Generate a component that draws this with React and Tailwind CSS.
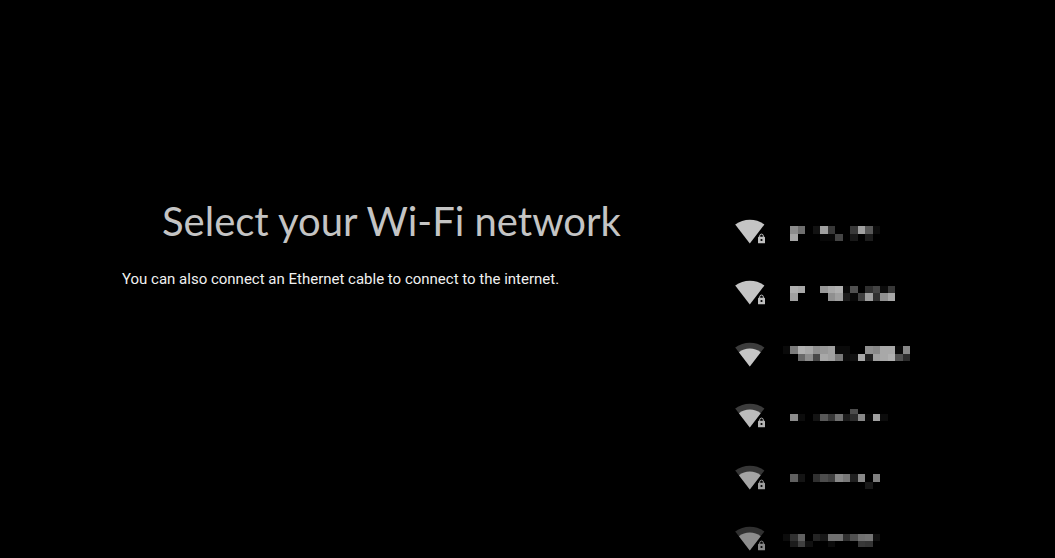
import React from "react";

const CELL = 7.5;

// Each network name is a mosaic: `top` is the y of the first line of cells,
// `from` and `to` trim the mosaic vertically, and every line lists grey
// levels from left to right.
const networks = [
  {
    strength: "full", locked: true, tone: "#c4c4c4", outer: "#c4c4c4", lock: "#c0c0c0", top: 9.75, from: 0, to: 30,
    lines: [
      [0, 140, 110, 0, 18, 160, 56, 0, 0, 56, 160, 88, 12],
      [0, 165, 0, 0, 0, 8, 8, 68, 0, 24, 0, 28],
    ],
  },
  {
    strength: "full", locked: true, tone: "#c4c4c4", outer: "#c4c4c4", lock: "#c0c0c0", top: 8.25, from: 0, to: 30,
    lines: [
      [0, 176, 168, 0, 0, 152, 168, 176, 8, 80, 0, 48, 68, 12, 56],
      [0, 160, 0, 0, 0, 0, 144, 160, 28, 8, 64, 160, 48, 144, 168],
    ],
  },
  {
    strength: "medium", locked: false, tone: "#c6c6c6", outer: "#3c3c3c", lock: "#c0c0c0", top: 6.75, from: 0, to: 30,
    lines: [
      [10, 124, 176, 168, 144, 152, 160, 10, 10, 0, 0, 144, 136, 168, 168, 8, 136],
      [0, 0, 104, 140, 72, 168, 160, 120, 12, 16, 168, 32, 160, 168, 176, 80, 44],
    ],
  },
  {
    strength: "medium", locked: true, tone: "#bcbcbc", outer: "#3c3c3c", lock: "#b4b4b4", top: 5.75, from: 8.75, to: 30,
    lines: [
      [0, 0, 0, 0, 0, 0, 0, 0, 0, 76],
      [0, 140, 12, 0, 20, 88, 56, 112, 28, 44, 136, 8, 160, 12],
    ],
  },
  {
    strength: "medium", locked: true, tone: "#a4a4a4", outer: "#363636", lock: "#a0a0a0", top: 11.75, from: 0, to: 30,
    lines: [
      [0, 96, 20, 0, 48, 76, 64, 136, 120, 32, 136, 0, 128],
      [0, 0, 0, 0, 0, 0, 0, 0, 0, 0, 0, 24],
    ],
  },
  {
    strength: "medium", locked: true, tone: "#8c8c8c", outer: "#303030", lock: "#888888", top: 10.25, from: 0, to: 23.5,
    lines: [
      [12, 48, 96, 0, 36, 24, 112, 112, 48, 80, 112, 116, 16],
      [0, 28, 64, 16, 0, 0, 12, 0, 0, 0, 56, 52],
    ],
  },
];

function SignalIcon({ network }) {
  return (
    <svg className="h-[30px] w-8 shrink-0" viewBox="0 0 32 30" aria-hidden="true">
      <path d="M0.2 7.6A24.8 24.8 0 0 1 29.4 7.6L14.8 26.6Z" fill={network.outer} />
      {network.strength === "medium" && (
        <path d="M3.9 12.2A17.8 17.8 0 0 1 25.7 12.2L14.8 26.6Z" fill={network.tone} />
      )}
      {network.locked && (
        <g>
          <path d="M24.7 20V18.9a1.8 1.8 0 0 1 3.6 0V20" fill="none" stroke={network.lock} strokeWidth="1" />
          <rect x="23" y="19.7" width="7" height="6.6" rx="0.6" fill={network.lock} />
          <circle cx="26.5" cy="23" r="1.1" fill="#000" />
        </g>
      )}
    </svg>
  );
}

function MosaicName({ network }) {
  return (
    <svg className="h-[30px] w-36 shrink-0" viewBox="0.5 0.5 144 30" shapeRendering="crispEdges" aria-hidden="true">
      {network.lines.map((line, row) => {
        const top = Math.max(network.top + row * CELL, network.from);
        const bottom = Math.min(network.top + (row + 1) * CELL, network.to);
        return line.map((level, col) =>
          level ? (
            <rect
              key={`${row}-${col}`}
              x={col * CELL}
              y={top}
              width={CELL}
              height={bottom - top}
              fill={`rgb(${level},${level},${level})`}
            />
          ) : null
        );
      })}
    </svg>
  );
}

export default function App() {
  return (
    <main className="grid h-screen grid-cols-[735fr_320fr] overflow-hidden bg-black pt-[201px]">
      <section className="pl-[122px]">
        <h1 className="pl-10 font-['Lato',sans-serif] text-[40px] leading-10 whitespace-nowrap text-[#c4c4c4]">
          Select your Wi-Fi network
        </h1>
        <p className="mt-7 font-['Roboto',sans-serif] text-[15px] leading-5 whitespace-nowrap text-[#f0f0f0]">
          You can also connect an Ethernet cable to connect to the internet.
        </p>
      </section>
      <ul className="grid h-[369px] grid-rows-6">
        {networks.map((network, index) => (
          <li key={index} className="flex">
            <button type="button" aria-label={`Network ${index + 1}`} className="flex w-full items-center gap-4">
              <SignalIcon network={network} />
              <MosaicName network={network} />
            </button>
          </li>
        ))}
      </ul>
    </main>
  );
}
